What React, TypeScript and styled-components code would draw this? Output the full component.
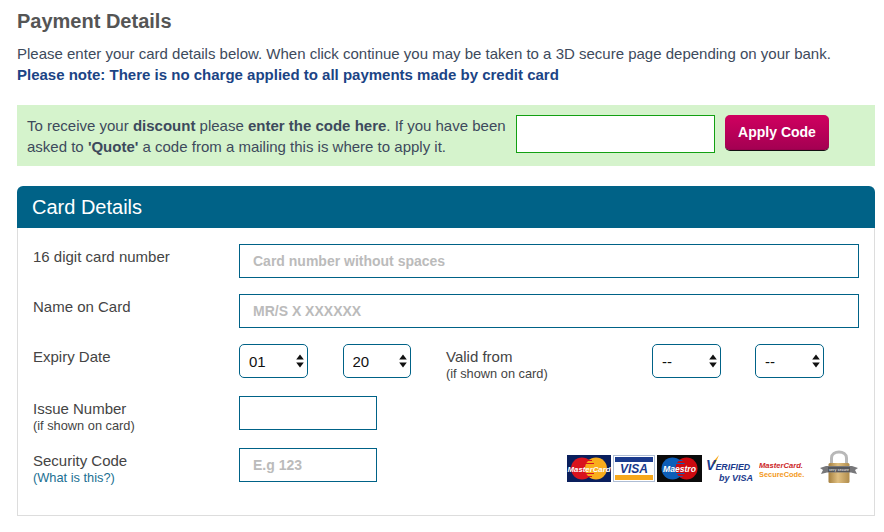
import styled, { createGlobalStyle } from "styled-components";

const GlobalStyle = createGlobalStyle`
    html, body {
        margin: 0;
        padding: 0;
        background: #fff;
    }
    body {
        font-family: "Liberation Sans", Arial, sans-serif;
        color: #444;
    }
`;

const ArrowIcon = () => (
    <SelectArrow width="8" height="14" viewBox="0 0 8 14">
        <path d="M4 0.5 L7.8 5.5 H0.2 Z M4 13.5 L7.8 8.5 H0.2 Z" fill="#111" />
    </SelectArrow>
);

const DropDown = ({ value }: { value: string }) => (
    <SelectBox>
        <SelectField defaultValue={value}>
            <option>{value}</option>
        </SelectField>
        <ArrowIcon />
    </SelectBox>
);

const OverlapStripes = ({ x, color }: { x: number; color: string }) => (
    <g stroke={color} strokeWidth="1">
        <path d={`M${x + 2} 5.5 h6 M${x} 8.5 h10 M${x} 18.5 h10 M${x + 2} 21.5 h6`} />
    </g>
);

const MasterCardBadge = () => (
    <svg width="44" height="27" viewBox="0 0 44 27">
        <rect width="44" height="27" fill="#0a1f5c" />
        <circle cx="15" cy="13.5" r="11" fill="#d9141e" />
        <circle cx="29" cy="13.5" r="11" fill="#f9ad1d" />
        <OverlapStripes x={17} color="#d9141e" />
        <text x="22" y="16.5" textAnchor="middle" fontFamily="Liberation Sans" fontStyle="italic" fontWeight="700" fontSize="7.8" fill="#fff">MasterCard</text>
    </svg>
);

const VisaBadge = () => (
    <svg width="42" height="27" viewBox="0 0 42 27">
        <rect x="0.5" y="0.5" width="41" height="26" fill="#fff" stroke="#aebdd4" />
        <rect x="2" y="2" width="38" height="5" fill="#1a3a8c" />
        <rect x="2" y="20" width="38" height="5" fill="#f7a81b" />
        <text x="21" y="18" textAnchor="middle" fontFamily="Liberation Sans" fontStyle="italic" fontWeight="700" fontSize="12" fill="#1a3a8c">VISA</text>
    </svg>
);

const MaestroBadge = () => (
    <svg width="45" height="27" viewBox="0 0 45 27">
        <rect width="45" height="27" fill="#0b0b0b" />
        <circle cx="15.5" cy="13.5" r="11" fill="#0d5eb8" />
        <circle cx="29.5" cy="13.5" r="11" fill="#cc0a10" />
        <OverlapStripes x={17.5} color="#0d5eb8" />
        <text x="22.5" y="16.5" textAnchor="middle" fontFamily="Liberation Sans" fontStyle="italic" fontWeight="700" fontSize="8.6" fill="#fff">Maestro</text>
    </svg>
);

const VerifiedBadge = () => (
    <svg width="50" height="28" viewBox="0 0 50 28">
        <path d="M6 8 L13 0 L9 9 Z" fill="#f7a81b" />
        <text x="0" y="15" fontFamily="Liberation Sans" fontStyle="italic" fontWeight="700" fontSize="14" fill="#1a3a8c">V</text>
        <text x="9.5" y="15" fontFamily="Liberation Sans" fontStyle="italic" fontWeight="700" fontSize="8.8" fill="#1a3a8c">ERIFIED</text>
        <text x="13" y="26" fontFamily="Liberation Sans" fontStyle="italic" fontWeight="700" fontSize="9" fill="#1a3a8c">by VISA</text>
    </svg>
);

const SecureCodeBadge = () => (
    <svg width="46" height="18" viewBox="0 0 46 18">
        <text x="0" y="8" fontFamily="Liberation Sans" fontStyle="italic" fontWeight="700" fontSize="7.6" fill="#cc1f26">MasterCard.</text>
        <text x="0" y="16.5" fontFamily="Liberation Sans" fontWeight="700" fontSize="7.4" fill="#f39a1c">SecureCode.</text>
    </svg>
);

const LockBadge = () => (
    <svg width="38" height="37" viewBox="0 0 38 37">
        <defs>
            <linearGradient id="lockBody" x1="0" x2="1" y1="0" y2="0">
                <stop offset="0" stopColor="#a5803f" />
                <stop offset="0.45" stopColor="#e0bf80" />
                <stop offset="1" stopColor="#b08c4c" />
            </linearGradient>
        </defs>
        <path d="M11.5 15 V9 C11.5 1 26.5 1 26.5 9 V15" fill="none" stroke="#b8b8b8" strokeWidth="3" />
        <rect x="8.5" y="14" width="21" height="20" rx="1.5" fill="url(#lockBody)" />
        <path d="M0 19 L6 17 L32 17 L38 19 L35 21 L37 25 L31 23.5 L7 23.5 L1 25 L3 21 Z" fill="#77777a" />
        <rect x="8" y="18" width="22" height="5" fill="#55565a" />
        <text x="19" y="22" textAnchor="middle" fontFamily="Liberation Sans" fontWeight="700" fontSize="3.6" fill="#ddd">very secure</text>
    </svg>
);

const App = () => {
    return (
        <Wrapper>
            <GlobalStyle />
            <Title>Payment Details</Title>
            <Intro>Please enter your card details below. When click continue you may be taken to a 3D secure page depending on your bank.</Intro>
            <Note>Please note: There is no charge applied to all payments made by credit card</Note>

            {/* discount code */}
            <DiscountBox>
                <DiscountText>
                    To receive your <b>discount</b> please <b>enter the code here</b>. If you have been asked to <b>'Quote'</b> a code from a mailing this is where to apply it.
                </DiscountText>
                <CodeInput type="text" />
                <ApplyButton type="button">Apply Code</ApplyButton>
            </DiscountBox>

            {/* card form */}
            <Card>
                <CardHeader>Card Details</CardHeader>
                <CardBody>
                    <Row>
                        <Label>16 digit card number</Label>
                        <TextField placeholder="Card number without spaces" />
                    </Row>
                    <Row>
                        <Label>Name on Card</Label>
                        <TextField placeholder="MR/S X XXXXXX" />
                    </Row>
                    <Row>
                        <Label>Expiry Date</Label>
                        <DateFields>
                            <DropDown value="01" />
                            <DropDown value="20" />
                            <ValidLabel>
                                Valid from
                                <Hint>(if shown on card)</Hint>
                            </ValidLabel>
                            <DropDown value="--" />
                            <DropDown value="--" />
                        </DateFields>
                    </Row>
                    <Row>
                        <Label>
                            Issue Number
                            <Hint>(if shown on card)</Hint>
                        </Label>
                        <ShortField />
                    </Row>
                    <Row>
                        <Label>
                            Security Code
                            <HelpLink href="#">(What is this?)</HelpLink>
                        </Label>
                        <SecurityFields>
                            <ShortField placeholder="E.g 123" />
                            <Badges>
                                <MasterCardBadge />
                                <VisaBadge />
                                <MaestroBadge />
                                <BadgeSlot $gap={4}><VerifiedBadge /></BadgeSlot>
                                <BadgeSlot $gap={3}><SecureCodeBadge /></BadgeSlot>
                                <LockSlot><LockBadge /></LockSlot>
                            </Badges>
                        </SecurityFields>
                    </Row>
                </CardBody>
            </Card>
        </Wrapper>
    );
};

export default App;

const Wrapper = styled.div`
    width: 884px;
    height: 532px;
    box-sizing: border-box;
    padding: 10px 9px 0 17px;
    overflow: hidden;
`;

const Title = styled.h2`
    margin: 0 0 11px;
    font-size: 20px;
    line-height: 22px;
    font-weight: 700;
    color: #555;
`;

const Intro = styled.p`
    margin: 0;
    font-size: 15px;
    line-height: 21px;
    color: #3d4a5c;
`;

const Note = styled.p`
    margin: 0 0 20px;
    font-size: 15px;
    line-height: 21px;
    font-weight: 700;
    color: #1b4485;
`;

const DiscountBox = styled.div`
    display: flex;
    align-items: flex-start;
    height: 61px;
    box-sizing: border-box;
    padding: 10px 0 0 10px;
    background: #d5f3cc;
    margin-bottom: 20px;
`;

const DiscountText = styled.p`
    width: 489px;
    margin: 0;
    font-size: 15px;
    line-height: 21px;
    color: #3d4a5c;
    b {
        font-weight: 700;
    }
`;

const CodeInput = styled.input`
    width: 199px;
    height: 38px;
    box-sizing: border-box;
    border: 1px solid #12a012;
    border-radius: 0;
    background: #fff;
    padding: 0 8px;
    outline: none;
`;

const ApplyButton = styled.button`
    width: 104px;
    height: 35px;
    margin-left: 10px;
    border: none;
    border-radius: 5px;
    padding: 0 0 2px;
    background: linear-gradient(#d0005f, #a30052);
    box-shadow: 0 1px 0 #111, inset 0 -1px 0 #99004c;
    color: #fff;
    font-family: "Liberation Sans", Arial, sans-serif;
    font-size: 14px;
    font-weight: 700;
`;

const Card = styled.section`
    display: flex;
    flex-direction: column;
`;

const CardHeader = styled.h3`
    margin: 0;
    height: 42px;
    padding-left: 15px;
    border-radius: 6px 6px 0 0;
    background: #006287;
    color: #fff;
    font-size: 20px;
    line-height: 43px;
    font-weight: 400;
`;

const CardBody = styled.div`
    display: flex;
    flex-direction: column;
    gap: 16px;
    height: 288px;
    box-sizing: border-box;
    padding: 16px 15px 0;
    border: 1px solid #ddd;
    border-top: none;
`;

const Row = styled.div`
    display: grid;
    grid-template-columns: 206px 1fr;
    height: 34px;

    &:nth-child(n + 3) {
        height: 36px;
    }
`;

const Label = styled.div`
    padding-top: 4px;
    font-size: 15px;
    line-height: 17px;
    color: #444;
`;

const Hint = styled.span`
    display: block;
    font-size: 12.8px;
    line-height: 17px;
    color: #444;
`;

const HelpLink = styled.a`
    display: block;
    font-size: 12.8px;
    line-height: 17px;
    color: #1b6f92;
    text-decoration: none;
`;

const TextField = styled.input`
    width: 100%;
    height: 34px;
    box-sizing: border-box;
    border: 1px solid #006287;
    border-radius: 0;
    padding: 0 13px;
    outline: none;
    background: #fff;
    font-family: "Liberation Sans", Arial, sans-serif;
    font-size: 14px;
    font-weight: 700;

    &::placeholder {
        color: #bbb;
        opacity: 1;
    }
`;

const ShortField = styled(TextField)`
    width: 138px;
`;

const DateFields = styled.div`
    display: flex;
    gap: 35px;
`;

const SelectBox = styled.div`
    position: relative;
    width: 68.5px;
    height: 34px;

    &:last-child {
        margin-left: -0.5px;
    }
`;

const SelectField = styled.select`
    width: 100%;
    height: 100%;
    box-sizing: border-box;
    appearance: none;
    border: 1px solid #006287;
    border-radius: 5px;
    background: #fff;
    padding: 0 0 0 9px;
    color: #111;
    font-family: "Liberation Sans", Arial, sans-serif;
    font-size: 15px;
    outline: none;
`;

const SelectArrow = styled.svg`
    position: absolute;
    top: 10px;
    right: 4px;
    pointer-events: none;
`;

const ValidLabel = styled(Label)`
    width: 171px;
`;

const SecurityFields = styled.div`
    display: flex;
    justify-content: space-between;
`;

const Badges = styled.div`
    display: flex;
    align-items: center;
    gap: 2px;
    height: 41px;
    margin-right: 1px;
`;

const BadgeSlot = styled.div<{ $gap: number }>`
    display: flex;
    margin-left: ${({ $gap }) => $gap - 2}px;
`;

const LockSlot = styled.div`
    display: flex;
    margin: 0 0 2px 13px;
`;
